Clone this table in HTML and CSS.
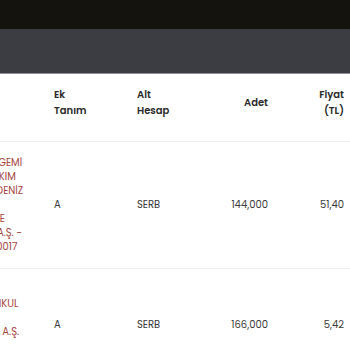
FILE: index.html
```html
<!DOCTYPE html>
<html lang="tr">
<head>
<meta charset="utf-8">
<title>Pay Tablosu</title>
<link rel="stylesheet" href="styles.css">
</head>
<body>
<header class="topbar"></header>
<div class="toolbar"></div>
<div class="scroller">
  <table class="holdings">
    <colgroup>
      <col class="c-name"><col class="c-ek"><col class="c-alt"><col class="c-adet"><col class="c-fiyat"><col class="c-tutar">
    </colgroup>
    <thead>
      <tr>
        <th class="left">Menkul<br>Kıymet</th>
        <th class="left">Ek<br>Tanım</th>
        <th class="left">Alt<br>Hesap</th>
        <th class="right">Adet</th>
        <th class="right">Fiyat<br>(TL)</th>
        <th class="right">Tutar<br>(TL)</th>
      </tr>
    </thead>
    <tbody>
      <tr>
        <td class="name">
          <span>PETROLÜ NAKLİYE GEMİ</span>
          <span>İŞLETMELERİ VE YAKIM</span>
          <span>ALAN HİZMETLERİ DENİZ</span>
          <span>TAŞIMACILIK</span>
          <span>SANAYİ TİCARET VE</span>
          <span>TİC. İŞLETMECİLİK A.Ş. -</span>
          <span>KODU TRAGEMIW0017</span>
        </td>
        <td>A</td>
        <td>SERB</td>
        <td class="right">144,000</td>
        <td class="right">51,40</td>
        <td class="right">7.401.600,00</td>
      </tr>
      <tr>
        <td class="name">
          <span>GLOBAL YATIRIM</span>
          <span>HOLDİNGS VE MENKUL</span>
          <span>KIYMETLER</span>
          <span>DOĞAL DEĞERLERİ A.Ş.</span>
          <span>-</span>
          <span>TRAGLYHO91E1</span>
        </td>
        <td>A</td>
        <td>SERB</td>
        <td class="right">166,000</td>
        <td class="right">5,42</td>
        <td class="right">899.720,00</td>
      </tr>
    </tbody>
  </table>
</div>
<script src="script.js"></script>
</body>
</html>
```

FILE: styles.css
```css
html, body {
  margin: 0;
  padding: 0;
  background: #ffffff;
  font-family: "Poppins", Inter, "Open Sans", "DejaVu Sans", sans-serif;
  font-size: 10px;
  color: #3a3a3a;
}

.topbar {
  height: 29px;
  background: #15130e;
}

.toolbar {
  height: 44px;
  background: #3c3d42;
  border-bottom: 1px solid #8d8e92;
}

.scroller {
  overflow-x: auto;
  scrollbar-width: none;
}

.scroller::-webkit-scrollbar {
  display: none;
}

.holdings {
  table-layout: fixed;
  border-collapse: collapse;
  width: 540px;
}

.c-name { width: 140px; }
.c-ek { width: 83px; }
.c-alt { width: 75px; }
.c-adet { width: 72px; }
.c-fiyat { width: 76px; }
.c-tutar { width: 94px; }

.holdings th {
  font-weight: 600;
  color: #2a2a2a;
  line-height: 16px;
  padding: 13px 8px 22px;
  vertical-align: middle;
  border-bottom: 1px solid #ececec;
}

.holdings td {
  line-height: 14px;
  padding: 14px 8px;
  vertical-align: middle;
  border-bottom: 1px solid #ececec;
  white-space: nowrap;
}

.left { text-align: left; }
.right { text-align: right; }

.holdings td.name {
  color: #a6463e;
}

.name span {
  display: block;
}
```

FILE: script.js
```js
document.querySelector('.scroller').scrollLeft = 94;
```
